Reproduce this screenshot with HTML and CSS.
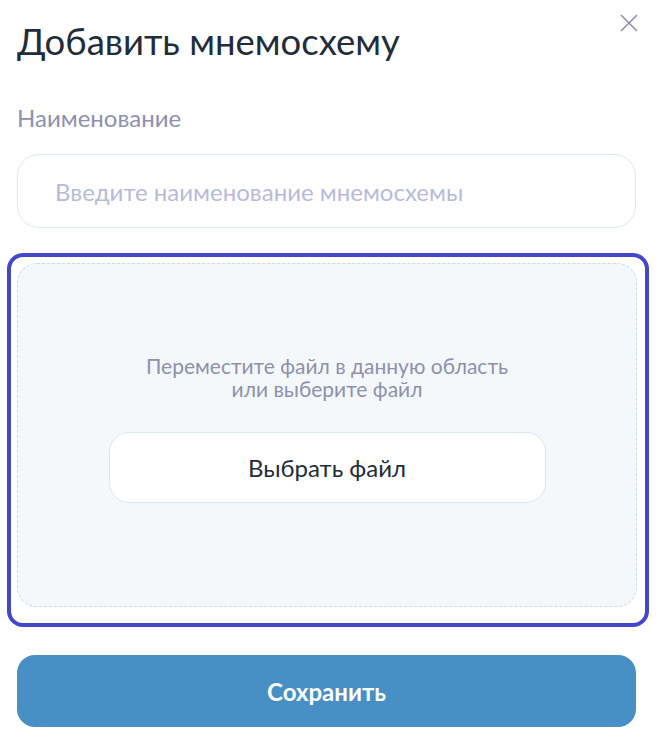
FILE: index.html
```html
<!doctype html>
<html>
<head>
  <meta charset="utf-8">
  <meta name="viewport" content="width=device-width, initial-scale=1">
  <title>Добавить мнемосхему</title>
  <link rel="stylesheet" href="styles.css">
</head>
<body>

  <div class="modal">
    <div class="modal-head">
      <h1 class="modal-title">Добавить мнемосхему</h1>
      <button class="modal-close" type="button" aria-label="Закрыть">
        <svg width="18" height="18" viewBox="0 0 18 18">
          <path d="M1 1L17 17M17 1L1 17" stroke="#8e8fae" stroke-width="1.6" fill="none"/>
        </svg>
      </button>
    </div>

    <label class="field-label" for="name">Наименование</label>
    <input id="name" class="field-input" type="text" placeholder="Введите наименование мнемосхемы">

    <div class="drop-focus">
      <div class="dropzone">
        <p class="dropzone-text">Переместите файл в данную область<br>или выберите файл</p>
        <button class="btn-file" type="button">Выбрать файл</button>
      </div>
    </div>

    <button class="btn-save" type="button">Сохранить</button>
  </div>

</body>
</html>
```

FILE: styles.css
```css
* {
  box-sizing: border-box;
}

body {
  margin: 0;
  background: #fff;
  font-family: Lato, "Noto Sans", sans-serif;
  color: #232c3a;
}

.modal {
  width: 658px;
  padding: 0 22px 0 17px;
  display: flex;
  flex-direction: column;
}

.modal-head {
  display: flex;
  justify-content: space-between;
  align-items: flex-start;
}

.modal-title {
  margin: 20px 0 0;
  font-size: 36.5px;
  font-weight: 400;
  line-height: 42px;
  color: #232c3a;
}

.modal-close {
  margin: 14px -2px 0 0;
  padding: 0;
  border: 0;
  background: none;
  width: 18px;
  height: 18px;
  cursor: pointer;
}

.modal-close svg {
  display: block;
}

.field-label {
  margin-top: 42px;
  font-size: 24px;
  line-height: 28px;
  color: #8f90ad;
}

.field-input {
  margin-top: 22px;
  height: 74px;
  width: 619px;
  padding: 0 37px;
  border: 1px solid #dfe9ef;
  border-radius: 22px;
  font-family: inherit;
  font-size: 24px;
  color: #232c3a;
  outline: none;
}

.field-input::placeholder {
  color: #b9bada;
}

.drop-focus {
  margin: 25px 0 0 -10px;
  width: 642px;
  padding: 6px 8px 16px 6px;
  border: 4px solid #4247cc;
  border-radius: 16px;
}

.dropzone {
  height: 344px;
  background: #f4f8fb;
  border: 1px dashed #cbdae6;
  border-radius: 20px;
  display: flex;
  flex-direction: column;
  align-items: center;
  padding-top: 90px;
}

.dropzone-text {
  margin: 0;
  text-align: center;
  font-size: 21px;
  line-height: 23px;
  color: #8f90ad;
}

.btn-file {
  margin-top: 32px;
  width: 437px;
  height: 71px;
  background: #fff;
  border: 1px solid #dce7ee;
  border-radius: 20px;
  font-family: inherit;
  font-size: 24px;
  color: #232c3a;
  cursor: pointer;
}

.btn-save {
  margin-top: 28px;
  width: 619px;
  height: 72px;
  background: #478fc4;
  border: 0;
  border-radius: 18px;
  font-family: inherit;
  font-size: 24px;
  font-weight: 700;
  color: #fff;
  cursor: pointer;
}
```
